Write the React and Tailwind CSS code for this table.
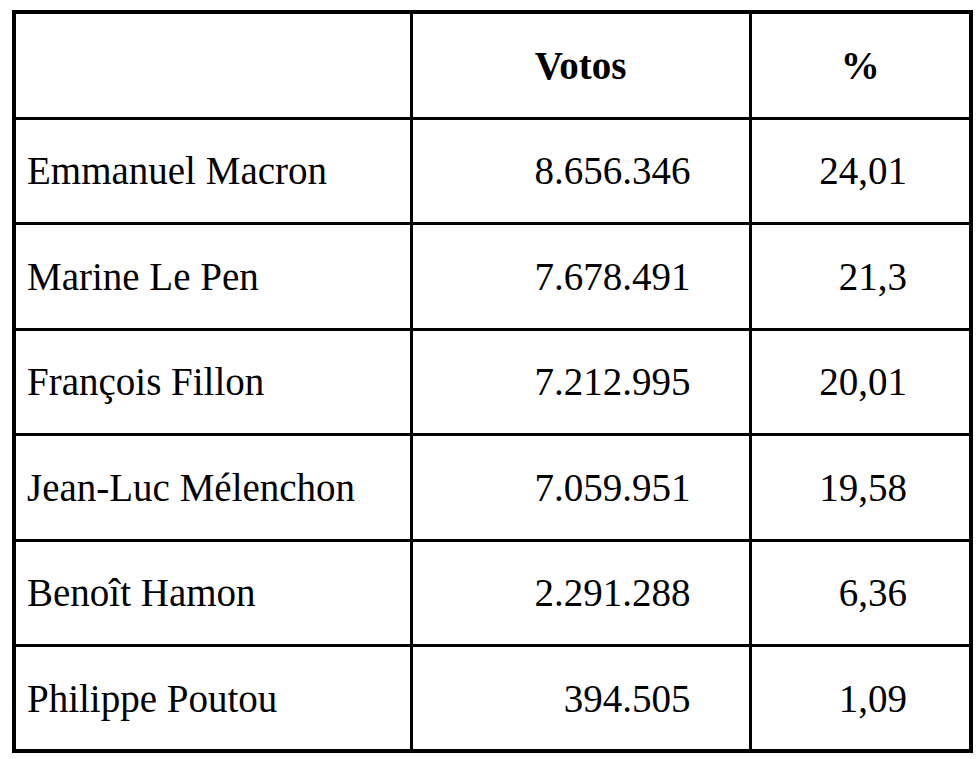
const rows = [
  ['Emmanuel Macron', '8.656.346', '24,01'],
  ['Marine Le Pen', '7.678.491', '21,3'],
  ['François Fillon', '7.212.995', '20,01'],
  ['Jean-Luc Mélenchon', '7.059.951', '19,58'],
  ['Benoît Hamon', '2.291.288', '6,36'],
  ['Philippe Poutou', '394.505', '1,09'],
];

const cell = "border-[3px] border-black font-['Liberation_Serif',serif] text-[39px] text-black";

export default function App() {
  return (
    <div className="min-h-screen bg-white pl-[12px] pt-[10px]">
      <table className="w-[957px] table-fixed border-collapse border-4 border-black font-['Liberation_Serif',serif] text-[39px] leading-none">
        <colgroup>
          <col className="w-[397px]" />
          <col className="w-[339px]" />
          <col className="w-[221px]" />
        </colgroup>
        <thead>
          <tr className="h-[106px]">
            <th className={cell}></th>
            <th className={`${cell} text-center font-bold`}>Votos</th>
            <th className={`${cell} text-center font-bold`}>%</th>
          </tr>
        </thead>
        <tbody>
          {rows.map(([name, votes, pct]) => (
            <tr key={name} className="h-[105.5px]">
              <td className={`${cell} pl-[11px] text-left`}>{name}</td>
              <td className={`${cell} pr-[58px] text-right`}>{votes}</td>
              <td className={`${cell} pr-[62px] text-right`}>{pct}</td>
            </tr>
          ))}
        </tbody>
      </table>
    </div>
  );
}
